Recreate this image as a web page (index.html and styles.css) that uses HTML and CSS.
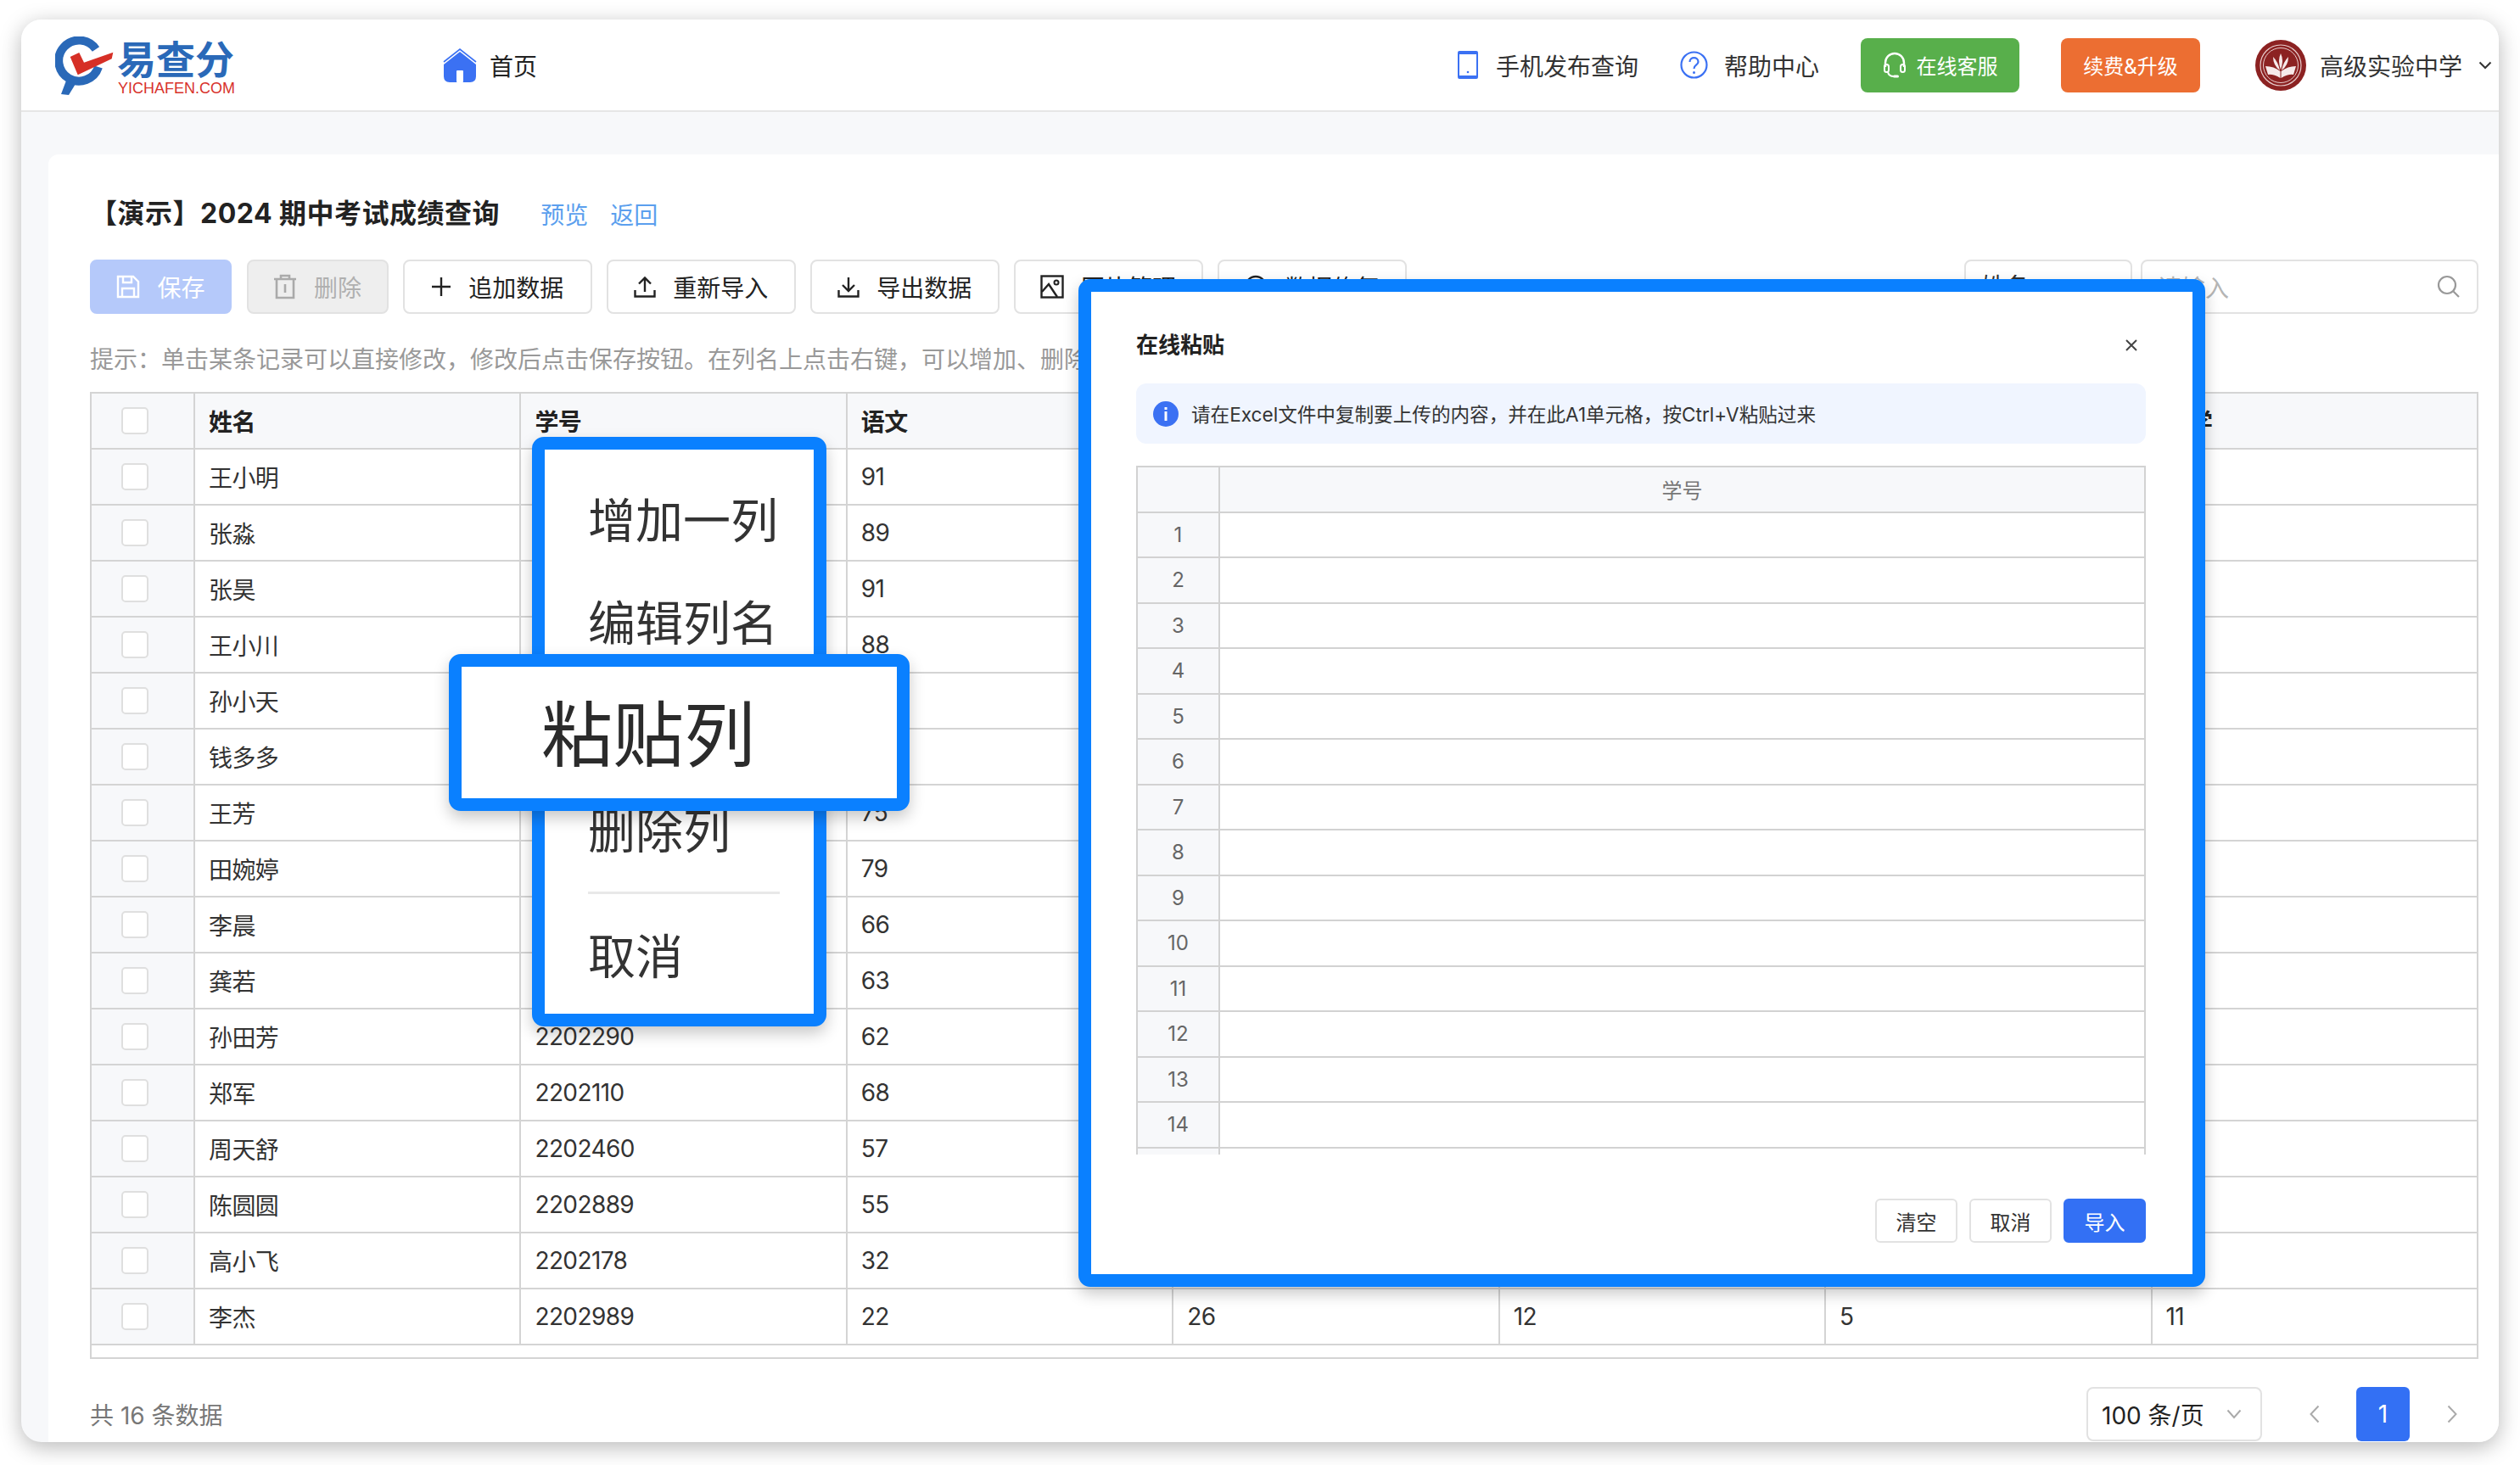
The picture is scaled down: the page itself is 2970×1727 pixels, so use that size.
FILE: index.html
```html
<!DOCTYPE html>
<html lang="zh-CN">
<head>
<meta charset="utf-8">
<title>易查分</title>
<link rel="stylesheet" href="styles.css">
</head>
<body>
<div class="window">
  <header class="topbar">
    <div class="logo">
      <svg class="logo-mark" viewBox="0 0 70 70" width="70" height="70">
        <path d="M48 15A24 24 0 1 0 51 36" fill="none" stroke="#2a69b8" stroke-width="10"/>
        <path d="M13 52L24 56L16 69L7 68Z" fill="#2a69b8"/>
        <path d="M17.7 24L28.3 19L34 30.7L68.3 18.7L66.7 26.3L26.7 45.3Z" fill="#d62f26"/>
      </svg>
      <div class="logo-text">
        <span class="logo-cn">易查分</span>
        <span class="logo-en">YICHAFEN.COM</span>
      </div>
    </div>
    <a class="home">
      <svg viewBox="0 0 40 40" width="40" height="40">
        <path d="M1 16L20 1L39 16" fill="none" stroke="#3b71f3" stroke-width="1.6"/>
        <path d="M20 4L39 19V33Q39 40 32 40H8Q1 40 1 33V19Z" fill="#3b71f3"/>
        <rect x="16" y="26" width="8" height="14" rx="1" fill="#fff"/>
      </svg>
      <span>首页</span>
    </a>
    <div class="top-actions">
      <a class="top-link phone-link">
        <svg viewBox="0 0 24 33" width="24" height="33">
          <rect x="1" y="1" width="22" height="31" rx="1" fill="none" stroke="#3b71f3" stroke-width="2"/>
          <rect x="1" y="1" width="22" height="3" fill="#3b71f3"/>
          <rect x="1" y="29" width="22" height="3" fill="#3b71f3"/>
          <circle cx="12" cy="25" r="1.3" fill="#3b71f3"/>
        </svg>
        <span>手机发布查询</span>
      </a>
      <a class="top-link help-link">
        <svg viewBox="0 0 33 33" width="33" height="33">
          <circle cx="16.5" cy="16.5" r="15" fill="none" stroke="#3b71f3" stroke-width="2.2"/>
          <path d="M11.5 13C11.5 6.500 21.500 6.500 21.500 13C21.500 16.500 16.500 16.500 16.500 21" fill="none" stroke="#3b71f3" stroke-width="2.2"/>
          <circle cx="16.5" cy="25.500" r="1.500" fill="#3b71f3"/>
        </svg>
        <span>帮助中心</span>
      </a>
      <a class="top-btn btn-service">
        <svg viewBox="0 0 30 32" width="30" height="32">
          <path d="M4 18V13A11 11 0 0 1 26 13V18" fill="none" stroke="#fff" stroke-width="2.400"/>
          <rect x="3" y="15" width="5" height="9" rx="2.500" fill="none" stroke="#fff" stroke-width="2"/>
          <rect x="22" y="15" width="5" height="9" rx="2.500" fill="none" stroke="#fff" stroke-width="2"/>
          <path d="M7 24Q8 29 14 29" fill="none" stroke="#fff" stroke-width="2"/>
          <rect x="13" y="27.500" width="7" height="3" rx="1.500" fill="#fff"/>
        </svg>
        <span>在线客服</span>
      </a>
      <a class="top-btn btn-upgrade">续费&amp;升级</a>
      <div class="user">
        <svg viewBox="0 0 60 60" width="60" height="60">
          <circle cx="30" cy="30" r="30" fill="#8c2222"/>
          <circle cx="30" cy="30" r="24" fill="none" stroke="#e8cccc" stroke-width="1.200"/>
          <circle cx="30" cy="30" r="20.500" fill="none" stroke="#e8cccc" stroke-width="1"/>
          <path d="M12 31Q22 31 29.500 37V45Q21 40 15 41Z" fill="#f6eaea"/>
          <path d="M48 31Q38 31 30.500 37V45Q39 40 45 41Z" fill="#f6eaea"/>
          <path d="M30 16Q34 24 30 35Q26 24 30 16Z" fill="#f6eaea"/>
          <path d="M21 20Q27 26 29 36Q21 30 21 20Z" fill="#f6eaea"/>
          <path d="M39 20Q33 26 31 36Q39 30 39 20Z" fill="#f6eaea"/>
        </svg>
        <span>高级实验中学</span>
        <svg class="user-chev" viewBox="0 0 16 10" width="16" height="10">
          <path d="M1.500 1.500L8 8L14.500 1.500" fill="none" stroke="#333" stroke-width="2"/>
        </svg>
      </div>
    </div>
  </header>

  <main class="main">
    <section class="card">
      <div class="title-row">
        <h1 class="title">【演示】2024 期中考试成绩查询</h1>
        <a class="link link-first">预览</a>
        <a class="link link-next">返回</a>
      </div>

      <div class="toolbar">
        <button class="btn btn-save">
          <svg viewBox="0 0 28 28" width="28" height="28"><path d="M2 2H20L26 8V26H2Z" fill="none" stroke="#fff" stroke-width="2.400"/><path d="M8 2V9H18V2M7 26V16H21V26" fill="none" stroke="#fff" stroke-width="2.400"/></svg>
          <span>保存</span>
        </button>
        <button class="btn btn-del">
          <svg viewBox="0 0 28 30" width="28" height="30"><path d="M1 6H27M9 6V2H19V6M4 6V28H24V6M14 12V22" fill="none" stroke="#aaa" stroke-width="2.600"/></svg>
          <span>删除</span>
        </button>
        <button class="btn btn-w1">
          <svg viewBox="0 0 24 24" width="24" height="24"><path d="M12 1V23M1 12H23" fill="none" stroke="#222" stroke-width="2.400"/></svg>
          <span>追加数据</span>
        </button>
        <button class="btn btn-w1">
          <svg viewBox="0 0 26 26" width="26" height="26"><path d="M13 19V3M6 9.500L13 2.500L20 9.500M1.500 17V24.500H24.500V17" fill="none" stroke="#222" stroke-width="2.400"/></svg>
          <span>重新导入</span>
        </button>
        <button class="btn btn-w1">
          <svg viewBox="0 0 26 26" width="26" height="26"><path d="M13 2V18M6 11L13 18L20 11M1.500 17V24.500H24.500V17" fill="none" stroke="#222" stroke-width="2.400"/></svg>
          <span>导出数据</span>
        </button>
        <button class="btn btn-w1">
          <svg viewBox="0 0 28 28" width="28" height="28"><rect x="1.500" y="1.500" width="25" height="25" fill="none" stroke="#222" stroke-width="2.400"/><circle cx="19" cy="9" r="2.500" fill="none" stroke="#222" stroke-width="2"/><path d="M2 20L10 11L20 26" fill="none" stroke="#222" stroke-width="2.400"/></svg>
          <span>图片管理</span>
        </button>
        <button class="btn btn-w1">
          <svg viewBox="0 0 28 28" width="28" height="28"><circle cx="14" cy="14" r="12" fill="none" stroke="#222" stroke-width="2.400"/></svg>
          <span>数据修复</span>
        </button>
        <div class="filter-select">姓名</div>
        <div class="search-box">
          <span>请输入</span>
          <svg viewBox="0 0 30 30" width="30" height="30"><circle cx="13" cy="13" r="10" fill="none" stroke="#999" stroke-width="2.200"/><path d="M20.500 20.500L27 27" stroke="#999" stroke-width="2.200"/></svg>
        </div>
      </div>

      <p class="hint">提示：单击某条记录可以直接修改，修改后点击保存按钮。在列名上点击右键，可以增加、删除列。</p>

      <table class="grid">
        <thead>
          <tr><th class="check-col"><i class="check"></i></th><th>姓名</th><th>学号</th><th>语文</th><th></th><th></th><th></th><th>化学</th></tr>
        </thead>
        <tbody>
          <tr><td class="check-col"><i class="check"></i></td><td>王小明</td><td></td><td>91</td><td></td><td></td><td></td><td></td></tr>
          <tr><td class="check-col"><i class="check"></i></td><td>张淼</td><td></td><td>89</td><td></td><td></td><td></td><td></td></tr>
          <tr><td class="check-col"><i class="check"></i></td><td>张昊</td><td></td><td>91</td><td></td><td></td><td></td><td></td></tr>
          <tr><td class="check-col"><i class="check"></i></td><td>王小川</td><td></td><td>88</td><td></td><td></td><td></td><td></td></tr>
          <tr><td class="check-col"><i class="check"></i></td><td>孙小天</td><td></td><td></td><td></td><td></td><td></td><td></td></tr>
          <tr><td class="check-col"><i class="check"></i></td><td>钱多多</td><td></td><td></td><td></td><td></td><td></td><td></td></tr>
          <tr><td class="check-col"><i class="check"></i></td><td>王芳</td><td></td><td>75</td><td></td><td></td><td></td><td></td></tr>
          <tr><td class="check-col"><i class="check"></i></td><td>田婉婷</td><td></td><td>79</td><td></td><td></td><td></td><td></td></tr>
          <tr><td class="check-col"><i class="check"></i></td><td>李晨</td><td></td><td>66</td><td></td><td></td><td></td><td></td></tr>
          <tr><td class="check-col"><i class="check"></i></td><td>龚若</td><td></td><td>63</td><td></td><td></td><td></td><td></td></tr>
          <tr><td class="check-col"><i class="check"></i></td><td>孙田芳</td><td>2202290</td><td>62</td><td></td><td></td><td></td><td></td></tr>
          <tr><td class="check-col"><i class="check"></i></td><td>郑军</td><td>2202110</td><td>68</td><td></td><td></td><td></td><td></td></tr>
          <tr><td class="check-col"><i class="check"></i></td><td>周天舒</td><td>2202460</td><td>57</td><td></td><td></td><td></td><td></td></tr>
          <tr><td class="check-col"><i class="check"></i></td><td>陈圆圆</td><td>2202889</td><td>55</td><td></td><td></td><td></td><td></td></tr>
          <tr><td class="check-col"><i class="check"></i></td><td>高小飞</td><td>2202178</td><td>32</td><td></td><td></td><td></td><td></td></tr>
          <tr><td class="check-col"><i class="check"></i></td><td>李杰</td><td>2202989</td><td>22</td><td>26</td><td>12</td><td>5</td><td>11</td></tr>
        </tbody>
      </table>
      <div class="grid-scroll"></div>

      <div class="pager">
        <span class="total">共 16 条数据</span>
        <div class="page-size">
          <span>100 条/页</span>
          <svg viewBox="0 0 18 12" width="18" height="12"><path d="M1.500 1.500L9 10L16.500 1.500" fill="none" stroke="#aaa" stroke-width="2"/></svg>
        </div>
        <span class="page-arrow">
          <svg viewBox="0 0 12 22" width="12" height="22"><path d="M10.500 1.500L1.500 11L10.500 20.500" fill="none" stroke="#aaa" stroke-width="2"/></svg>
        </span>
        <span class="page-num">1</span>
        <span class="page-arrow">
          <svg viewBox="0 0 12 22" width="12" height="22"><path d="M1.500 1.500L10.500 11L1.500 20.500" fill="none" stroke="#aaa" stroke-width="2"/></svg>
        </span>
      </div>
    </section>
  </main>

  <div class="callout menu">
    <div class="menu-item">增加一列</div>
    <div class="menu-item">编辑列名</div>
    <div class="menu-item menu-item-slot"></div>
    <div class="menu-item menu-item-del">删除列</div>
    <div class="menu-sep"></div>
    <div class="menu-item menu-item-cancel">取消</div>
  </div>
  <div class="callout paste">粘贴列</div>

  <div class="callout modal">
    <div class="modal-head">
      <h2 class="modal-title">在线粘贴</h2>
      <svg class="modal-close" viewBox="0 0 14 14" width="14" height="14"><path d="M1 1L13 13M13 1L1 13" stroke="#444" stroke-width="2"/></svg>
    </div>
    <div class="alert">
      <svg viewBox="0 0 30 30" width="30" height="30"><circle cx="15" cy="15" r="15" fill="#3b71f3"/><rect x="13.500" y="12" width="3" height="11" fill="#fff"/><rect x="13.500" y="7" width="3" height="3" fill="#fff"/></svg>
      <span>请在Excel文件中复制要上传的内容，并在此A1单元格，按Ctrl+V粘贴过来</span>
    </div>
    <div class="sheet-clip">
      <table class="sheet">
        <thead><tr><th class="sheet-idx"></th><th>学号</th></tr></thead>
        <tbody>
          <tr><td class="sheet-idx">1</td><td></td></tr>
          <tr><td class="sheet-idx">2</td><td></td></tr>
          <tr><td class="sheet-idx">3</td><td></td></tr>
          <tr><td class="sheet-idx">4</td><td></td></tr>
          <tr><td class="sheet-idx">5</td><td></td></tr>
          <tr><td class="sheet-idx">6</td><td></td></tr>
          <tr><td class="sheet-idx">7</td><td></td></tr>
          <tr><td class="sheet-idx">8</td><td></td></tr>
          <tr><td class="sheet-idx">9</td><td></td></tr>
          <tr><td class="sheet-idx">10</td><td></td></tr>
          <tr><td class="sheet-idx">11</td><td></td></tr>
          <tr><td class="sheet-idx">12</td><td></td></tr>
          <tr><td class="sheet-idx">13</td><td></td></tr>
          <tr><td class="sheet-idx">14</td><td></td></tr>
          <tr><td class="sheet-idx"></td><td></td></tr>
        </tbody>
      </table>
    </div>
    <div class="modal-foot">
      <button class="mbtn">清空</button>
      <button class="mbtn">取消</button>
      <button class="mbtn mbtn-primary">导入</button>
    </div>
  </div>
</div>
</body>
</html>
```
FILE: styles.css
```css
* { box-sizing: border-box; }
html, body { margin: 0; padding: 0; }
body {
  width: 2970px;
  height: 1727px;
  padding: 23px 25px 0;
  overflow: hidden;
  background: #fff;
  font-family: Inter, "Noto Sans CJK SC", sans-serif;
  font-size: 28px;
  color: #333;
}
button { font-family: inherit; }
svg { display: block; flex: none; }

.window {
  position: relative;
  width: 2920px;
  height: 1677px;
  border-radius: 24px;
  background: #f7f8fa;
  box-shadow: 0 6px 26px rgba(0, 0, 0, .28);
  display: flex;
  flex-direction: column;
}

/* top bar */
.topbar {
  height: 109px;
  flex: none;
  background: #fff;
  border-radius: 24px 24px 0 0;
  border-bottom: 2px solid #e6e6e6;
  display: flex;
  align-items: center;
  padding-left: 40px;
}
.logo { display: flex; align-items: flex-start; width: 457px; height: 70px; }
.logo-mark { margin-top: 1px; }
.logo-text { display: flex; flex-direction: column; margin-left: 4px; }
.logo-cn {
  font-size: 46px;
  line-height: 46px;
  font-weight: 700;
  color: #2a69b8;
  margin-left: -1px;
  margin-top: 5px;
}
.logo-en {
  font-family: "Liberation Sans", sans-serif;
  font-size: 18px;
  line-height: 18px;
  color: #d8322b;
  margin-top: 2px;
}
.home { display: flex; align-items: center; gap: 15px; color: #222; }
.top-actions { margin-left: auto; display: flex; align-items: center; gap: 49px; }
.top-link { display: flex; align-items: center; color: #333; white-space: nowrap; }
.phone-link { gap: 21px; }
.help-link { gap: 19px; }
.top-btn {
  height: 64px;
  border-radius: 8px;
  color: #fff;
  font-size: 24px;
  display: flex;
  align-items: center;
  justify-content: center;
  white-space: nowrap;
}
.btn-service { width: 187px; gap: 10px; background: #58af4b; }
.btn-upgrade { width: 164px; background: #ec6e32; }
.user { display: flex; align-items: center; margin-left: 16px; gap: 16px; padding-right: 8px; white-space: nowrap; }
.user-chev { margin-left: 3px; }

/* main */
.main { flex: 1; min-height: 0; padding: 50px 0 0 32px; display: flex; }
.card {
  flex: 1;
  min-width: 0;
  background: #fff;
  border-radius: 12px 0 24px 0;
  padding: 48px 24px 0 49px;
}
.title-row { display: flex; align-items: center; height: 44px; }
.title { margin: 0; font-size: 32px; line-height: 44px; font-weight: 700; color: #222; white-space: nowrap; letter-spacing: .5px; }
.link { color: #5b9fee; font-size: 28px; }
.link-first { margin-left: 48px; }
.link-next { margin-left: 26px; }

.toolbar { display: flex; align-items: center; gap: 17.500px; margin-top: 32px; height: 64px; }
.btn {
  height: 64px;
  border: 2px solid #e2e2e2;
  border-radius: 8px;
  background: #fff;
  color: #222;
  font-size: 28px;
  display: flex;
  align-items: center;
  justify-content: center;
  gap: 20px;
  padding: 0;
  white-space: nowrap;
}
.btn-w1 { width: 222.500px; }
.btn-save { width: 167px; background: #b5c9fa; border-color: #b5c9fa; color: #fff; }
.btn-del { width: 167px; background: #eee; color: #b0b0b0; }
.filter-select {
  margin-left: auto;
  width: 198px;
  height: 64px;
  border: 2px solid #e2e2e2;
  border-radius: 8px;
  padding: 0 18px;
  line-height: 60px;
}
.search-box {
  width: 398px;
  height: 64px;
  margin-left: -7.500px;
  border: 2px solid #e2e2e2;
  border-radius: 8px;
  padding: 0 18px;
  color: #b5b5b5;
  display: flex;
  align-items: center;
  justify-content: space-between;
}

.hint { margin: 34px 0 18px; height: 40px; line-height: 40px; color: #999; white-space: nowrap; }

/* data table */
.grid {
  width: 2815px;
  table-layout: fixed;
  border-collapse: collapse;
}
.grid th, .grid td {
  height: 66px;
  border: 2px solid #d4d4d4;
  padding: 0 0 0 16px;
  text-align: left;
  font-size: 28px;
  letter-spacing: -.6px;
}
.grid th { background: #f7f8fa; font-weight: 700; color: #222; }
.grid .check-col { width: 122px; padding: 0; background: #f7f8fa; }
.check {
  display: block;
  width: 32px;
  height: 32px;
  margin-left: 35px;
  background: #fff;
  border: 2px solid #dfdfdf;
  border-radius: 5px;
}
.grid-scroll { height: 16px; width: 2815px; border: 2px solid #d4d4d4; border-top: 0; }

.pager { display: flex; align-items: center; margin-top: 33px; height: 64px; }
.total { color: #777; margin-right: auto; }
.page-size {
  width: 207px;
  height: 64px;
  border: 2px solid #e2e2e2;
  border-radius: 8px;
  display: flex;
  align-items: center;
  justify-content: space-between;
  padding: 0 22px 0 16px;
  color: #222;
  margin-right: 30px;
  white-space: nowrap;
}
.page-arrow { width: 63px; height: 64px; display: flex; align-items: center; justify-content: center; }
.page-num {
  width: 63px;
  height: 64px;
  margin: 0 18px;
  border-radius: 6px;
  background: #3370f4;
  color: #fff;
  display: flex;
  align-items: center;
  justify-content: center;
}

/* annotation callouts over the page */
.callout {
  position: absolute;
  background: #fff;
  border: 15px solid #0a80ff;
  border-radius: 14px;
  box-shadow: 0 8px 18px rgba(0, 0, 0, .22);
}
.menu { left: 602px; top: 492px; width: 347px; height: 695px; padding: 24px 0 0 51px; }
.menu-item { height: 121px; line-height: 121px; font-size: 56px; color: #333; white-space: nowrap; }
.menu-item-del { position: relative; top: 3px; }
.menu-sep { height: 3px; background: #e8e8e8; margin: 13px 40px 0 0; }
.menu-item-cancel { margin-top: 14px; }
.paste {
  left: 504px;
  top: 748px;
  width: 543px;
  height: 185px;
  padding-left: 94px;
  font-size: 84px;
  line-height: 161px;
  color: #2b2b2b;
  white-space: nowrap;
}

/* modal */
.modal {
  left: 1246px;
  top: 306px;
  width: 1328px;
  height: 1188px;
  border-width: 15px;
  padding: 45px 55px 0 53px;
}
.modal-head { display: flex; align-items: center; justify-content: space-between; height: 36px; padding-right: 10px; }
.modal-title { margin: 0; font-size: 26px; line-height: 36px; font-weight: 700; color: #222; }
.alert {
  margin-top: 27px;
  height: 71px;
  border-radius: 12px;
  background: #f0f5ff;
  padding-left: 20px;
  display: flex;
  align-items: center;
  gap: 15px;
  font-size: 22.600px;
  color: #333;
  white-space: nowrap;
}
.sheet-clip { margin-top: 26px; height: 812px; overflow: hidden; }
.sheet { width: 100%; table-layout: fixed; border-collapse: collapse; }
.sheet th, .sheet td {
  height: 53.500px;
  border: 2px solid #d2d2d2;
  text-align: center;
  font-size: 24px;
  font-weight: 400;
  padding: 0;
  color: #777;
}
.sheet th { background: #f7f8fa; }
.sheet .sheet-idx { width: 97px; background: #f7f8fa; color: #666; }
.modal-foot { display: flex; justify-content: flex-end; gap: 14px; margin-top: 52px; }
.mbtn {
  width: 97px;
  height: 52px;
  padding: 0;
  background: #fff;
  border: 2px solid #e2e2e2;
  border-radius: 6px;
  font-size: 24px;
  color: #333;
}
.mbtn-primary { background: #3370f4; border-color: #3370f4; color: #fff; }
```
